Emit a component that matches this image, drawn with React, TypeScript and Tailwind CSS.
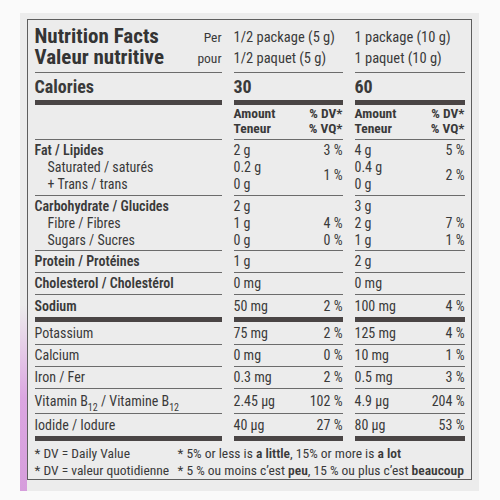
import React from "react";

const font = "font-['Roboto',sans-serif] [font-stretch:75%]";

type Block = {
  h: string;
  thick?: boolean;
  label: React.ReactNode;
  a: React.ReactNode;
  b: React.ReactNode;
};

const Pct = ({ amount, pct }: { amount: React.ReactNode; pct?: React.ReactNode }) => (
  <div className="flex h-full items-center justify-between">
    <span>{amount}</span>
    <span>{pct}</span>
  </div>
);

const Row = ({ h, thick, label, a, b }: Block) => {
  const line = thick ? "border-b-[5px] border-[#4a4545]" : "border-b-[1.5px] border-[#6b6b6b]";
  return (
    <div className={`grid grid-cols-[187px_109px_110px] gap-x-[12px] ${h}`}>
      <div className={`${line} flex items-center`}>{label}</div>
      <div className={line}>{a}</div>
      <div className={line}>{b}</div>
    </div>
  );
};

// three-line group: amounts left, percentages right
const Group = ({ amounts, pcts }: { amounts: string[]; pcts: React.ReactNode }) => (
  <div className="flex justify-between pt-[1.5px] leading-[17px]">
    <div className="flex flex-col">
      {amounts.map((x, i) => (
        <span key={i}>{x}</span>
      ))}
    </div>
    <div className="flex flex-col items-end">{pcts}</div>
  </div>
);

const Sub = () => <sub className="text-[10px] align-[-3px]">12</sub>;

export default function App() {
  return (
    <div className={`${font} w-[500px] h-[500px] bg-[#fafafa] pt-[13px] pl-[20px] text-[#3a3a3a] text-[14px]`}>
      <div className="w-[459px] h-[478px] bg-[#ececec] flex">
        <div className="w-[7px] flex flex-col pt-[292px]">
          <div className="flex-1 bg-gradient-to-b from-[#ececec] via-[#dba6e1] to-[#d69edc]" />
        </div>
        <div className="mt-[6px] w-[445px] h-[461px] border-[1.5px] border-[#5e5e5e] pl-[6.5px]">
          {/* header */}
          <div className="grid grid-cols-[187px_109px_110px] gap-x-[12px] h-[53px]">
            <div className="border-b-[1.5px] border-[#6b6b6b] flex justify-between pt-[6px] leading-[21px]">
              <div className="font-bold text-[21px] text-[#343434]">
                <div>Nutrition Facts</div>
                <div>Valeur nutritive</div>
              </div>
              <div className="text-[13.5px] text-right pt-[1px]">
                <div>Per</div>
                <div>pour</div>
              </div>
            </div>
            <div className="border-b-[1.5px] border-[#6b6b6b] pt-[7px] leading-[21px] text-[14.5px]">
              <div>1/2 package (5 g)</div>
              <div>1/2 paquet (5 g)</div>
            </div>
            <div className="border-b-[1.5px] border-[#6b6b6b] pt-[7px] leading-[21px] text-[14.5px]">
              <div>1 package (10 g)</div>
              <div>1 paquet (10 g)</div>
            </div>
          </div>

          {/* calories */}
          <div className="grid grid-cols-[187px_109px_110px] gap-x-[12px] h-[30px] text-[18px] font-bold">
            <div className="border-b-[5px] border-[#4a4545] flex items-center">Calories</div>
            <div className="border-b-[5px] border-[#4a4545] flex items-center">30</div>
            <div className="border-b-[5px] border-[#4a4545] flex items-center">60</div>
          </div>

          {/* amount / teneur */}
          <div className="grid grid-cols-[187px_109px_110px] gap-x-[12px] h-[37px] text-[13.5px] font-bold leading-[15px]">
            <div className="border-b-[1.5px] border-[#6b6b6b]" />
            {[0, 1].map((k) => (
              <div key={k} className="border-b-[1.5px] border-[#6b6b6b] flex justify-between pt-[3px]">
                <div>
                  <div>Amount</div>
                  <div>Teneur</div>
                </div>
                <div className="text-right">
                  <div>% DV*</div>
                  <div>% VQ*</div>
                </div>
              </div>
            ))}
          </div>

          {/* fat */}
          <div className="grid grid-cols-[187px_109px_110px] gap-x-[12px] h-[56px]">
            <div className="border-b-[1.5px] border-[#6b6b6b] pt-[1.5px] leading-[17px]">
              <div className="font-semibold">Fat / Lipides</div>
              <div className="pl-[13px]">Saturated / saturés</div>
              <div className="pl-[13px]">+ Trans / trans</div>
            </div>
            <div className="border-b-[1.5px] border-[#6b6b6b]">
              <Group
                amounts={["2 g", "0.2 g", "0 g"]}
                pcts={
                  <>
                    <span className="h-[17px]">3 %</span>
                    <span className="h-[34px] flex items-center">1 %</span>
                  </>
                }
              />
            </div>
            <div className="border-b-[1.5px] border-[#6b6b6b]">
              <Group
                amounts={["4 g", "0.4 g", "0 g"]}
                pcts={
                  <>
                    <span className="h-[17px]">5 %</span>
                    <span className="h-[34px] flex items-center">2 %</span>
                  </>
                }
              />
            </div>
          </div>

          {/* carbohydrate */}
          <div className="grid grid-cols-[187px_109px_110px] gap-x-[12px] h-[55px]">
            <div className="border-b-[1.5px] border-[#6b6b6b] pt-[1.5px] leading-[17px]">
              <div className="font-semibold">Carbohydrate / Glucides</div>
              <div className="pl-[13px]">Fibre / Fibres</div>
              <div className="pl-[13px]">Sugars / Sucres</div>
            </div>
            <div className="border-b-[1.5px] border-[#6b6b6b]">
              <Group
                amounts={["2 g", "1 g", "0 g"]}
                pcts={
                  <>
                    <span className="h-[17px]" />
                    <span>4 %</span>
                    <span>0 %</span>
                  </>
                }
              />
            </div>
            <div className="border-b-[1.5px] border-[#6b6b6b]">
              <Group
                amounts={["3 g", "2 g", "1 g"]}
                pcts={
                  <>
                    <span className="h-[17px]" />
                    <span>7 %</span>
                    <span>1 %</span>
                  </>
                }
              />
            </div>
          </div>

          <Row h="h-[22px]" label={<span className="font-semibold">Protein / Protéines</span>} a={<Pct amount="1 g" />} b={<Pct amount="2 g" />} />
          <Row h="h-[22px]" label={<span className="font-semibold">Cholesterol / Cholestérol</span>} a={<Pct amount="0 mg" />} b={<Pct amount="0 mg" />} />
          <Row h="h-[27px]" thick label={<span className="font-semibold">Sodium</span>} a={<Pct amount="50 mg" pct="2 %" />} b={<Pct amount="100 mg" pct="4 %" />} />
          <Row h="h-[23px]" label="Potassium" a={<Pct amount="75 mg" pct="2 %" />} b={<Pct amount="125 mg" pct="4 %" />} />
          <Row h="h-[22px]" label="Calcium" a={<Pct amount="0 mg" pct="0 %" />} b={<Pct amount="10 mg" pct="1 %" />} />
          <Row h="h-[22px]" label="Iron / Fer" a={<Pct amount="0.3 mg" pct="2 %" />} b={<Pct amount="0.5 mg" pct="3 %" />} />
          <Row
            h="h-[25px]"
            label={
              <span>
                Vitamin B<Sub /> / Vitamine B<Sub />
              </span>
            }
            a={<Pct amount="2.45 µg" pct="102 %" />}
            b={<Pct amount="4.9 µg" pct="204 %" />}
          />
          <Row h="h-[27px]" thick label="Iodide / Iodure" a={<Pct amount="40 µg" pct="27 %" />} b={<Pct amount="80 µg" pct="53 %" />} />

          {/* footer */}
          <div className="flex pt-[4px] leading-[17px] text-[13.5px] whitespace-nowrap">
            <div className="w-[143px]">
              <div>* DV = Daily Value</div>
              <div>* DV = valeur quotidienne</div>
            </div>
            <div>
              <div>
                * 5% or less is <b className="font-semibold">a little</b>, 15% or more is <b className="font-semibold">a lot</b>
              </div>
              <div>
                * 5 % ou moins c’est <b className="font-semibold">peu</b>, 15 % ou plus c’est <b className="font-semibold">beaucoup</b>
              </div>
            </div>
          </div>
        </div>
      </div>
    </div>
  );
}
